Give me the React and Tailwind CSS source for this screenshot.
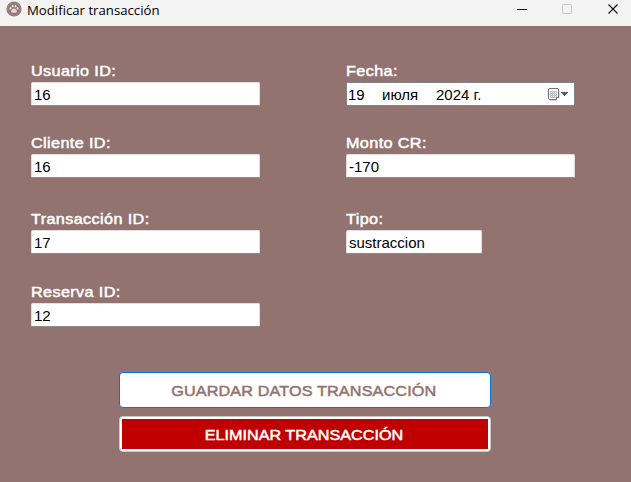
import React from 'react';

const inputBox =
  "flex h-6 items-center rounded-[2px] border border-[#e3dfde] border-b-[#8a8b8b] bg-white pl-[2px] font-['Liberation_Sans',Arial,sans-serif] text-[15px] leading-none text-black outline-none";

function Label({ children }) {
  return (
    <span className="block h-5 origin-left scale-x-[1.08] whitespace-nowrap font-['Liberation_Sans',Arial,sans-serif] text-[15px] leading-[17px] tracking-[0.35px] text-white [-webkit-text-stroke:0.5px_white]">
      {children}
    </span>
  );
}

function Field({ label, value, width = 'w-[229px]' }) {
  return (
    <label className="block">
      <Label>{label}</Label>
      <input readOnly value={value} className={`${inputBox} ${width}`} />
    </label>
  );
}

function PawIcon() {
  return (
    <svg width="16" height="16" viewBox="0 0 16 16" className="shrink-0">
      <circle cx="8" cy="8" r="7.6" fill="#947471" />
      <circle cx="8" cy="8" r="6.3" fill="none" stroke="#b39c99" strokeWidth="0.6" />
      <g fill="#e2d8d6">
        <ellipse cx="4.5" cy="7.4" rx="1" ry="1.3" />
        <ellipse cx="6.6" cy="5.2" rx="1" ry="1.4" />
        <ellipse cx="9.5" cy="5.2" rx="1" ry="1.4" />
        <ellipse cx="11.6" cy="7.4" rx="1" ry="1.3" />
        <path d="M8 7.4c1.5 0 3 2 3 3.2s-1.6 1.5-3 1.1c-1.4.4-3 .1-3-1.1s1.5-3.2 3-3.2z" />
      </g>
    </svg>
  );
}

function CalendarIcon() {
  return (
    <svg width="21" height="14" viewBox="0 0 21 14" shapeRendering="crispEdges">
      <path d="M2 12h7v1H2zM11 3h1v7h-1z" fill="#dedad8" />
      <path d="M1 0h9v1H1zM0 1h1v10H0zM10 1h1v8h-1zM1 11h8v1H1zM8 9h3v1H9v2H8z" fill="#806f6d" />
      <path d="M1 1h9v8H8v2H1z" fill="#f5f6f7" />
      <path d="M2 3h7v6H8v1H2z" fill="#b9c4d1" />
      <path d="M3 4h1v1H3zM5 4h1v1H5zM7 4h1v1H7zM3 6h1v1H3zM5 6h1v1H5zM7 6h1v1H7zM3 8h1v1H3zM5 8h1v1H5zM7 8h1v1H7z" fill="#fff" />
      <path d="M13 4h7v1h-1v1h-1v1h-1v1h-1V7h-1V6h-1V5h-1z" fill="#465b8c" />
    </svg>
  );
}

export default function App() {
  return (
    <main className="flex h-[482px] w-[631px] flex-col overflow-hidden bg-[#927370]">
      <header className="flex h-[26px] shrink-0 items-start bg-[#f3f3f3] pl-[6px]">
        <div className="pt-px"><PawIcon /></div>
        <h1 className="ml-[5px] mt-px whitespace-nowrap font-['Open_Sans',sans-serif] text-[13.2px] leading-[19px] text-black">
          Modificar transacción
        </h1>
        <div className="ml-auto flex pr-[12px] pt-[3px]">
          <svg width="102" height="12" viewBox="0 0 102 12" fill="none">
            <path d="M0 6.5h10" stroke="#111" />
            <rect x="45.5" y="1.5" width="9" height="9" rx="1" stroke="#c3c3c3" />
            <path d="M91.5 1.5l9 9M100.5 1.5l-9 9" stroke="#111" strokeWidth="1.1" />
          </svg>
        </div>
      </header>

      <section className="flex gap-[86px] pl-[31px] pt-9">
        <div className="w-[229px]">
          <Field label="Usuario ID:" value="16" />
          <div className="mt-7"><Field label="Cliente ID:" value="16" /></div>
          <div className="mt-8"><Field label="Transacción ID:" value="17" /></div>
          <div className="mt-[29px]"><Field label="Reserva ID:" value="12" /></div>
        </div>
        <div className="w-[229px]">
          <Label>Fecha:</Label>
          <div className="flex h-6 items-center border border-[#7f8286] bg-white pl-px pr-[5px] font-['Liberation_Sans',Arial,sans-serif] text-[15px] leading-[15px] text-black">
            <span className="w-[34px] pt-px">19</span>
            <span className="w-[54px] pt-px">июля</span>
            <span className="pt-px">2024 г.</span>
            <span className="ml-auto flex pt-px"><CalendarIcon /></span>
          </div>
          <div className="mt-7"><Field label="Monto CR:" value="-170" /></div>
          <div className="mt-8"><Field label="Tipo:" value="sustraccion" width="w-[136px]" /></div>
        </div>
      </section>

      <section className="ml-[119px] mt-[45px] flex w-[372px] flex-col gap-2 font-['Liberation_Sans',Arial,sans-serif] text-[15px] leading-none">
        <button className="h-9 rounded-[4px] border border-[#0078d4] bg-white pr-[2px] text-[#927370]">
          <span className="inline-block scale-x-[1.08] whitespace-nowrap tracking-[0.12px] [-webkit-text-stroke:0.5px_#927370]">
            GUARDAR DATOS TRANSACCIÓN
          </span>
        </button>
        <button className="h-9 rounded-[4px] border border-[#cfc8c8] bg-white p-[2px] text-white">
          <span className="flex h-full items-center justify-center bg-[#c00000] pr-[2px]">
            <span className="inline-block scale-x-[1.08] whitespace-nowrap [-webkit-text-stroke:0.5px_white]">
              ELIMINAR TRANSACCIÓN
            </span>
          </span>
        </button>
      </section>
    </main>
  );
}
